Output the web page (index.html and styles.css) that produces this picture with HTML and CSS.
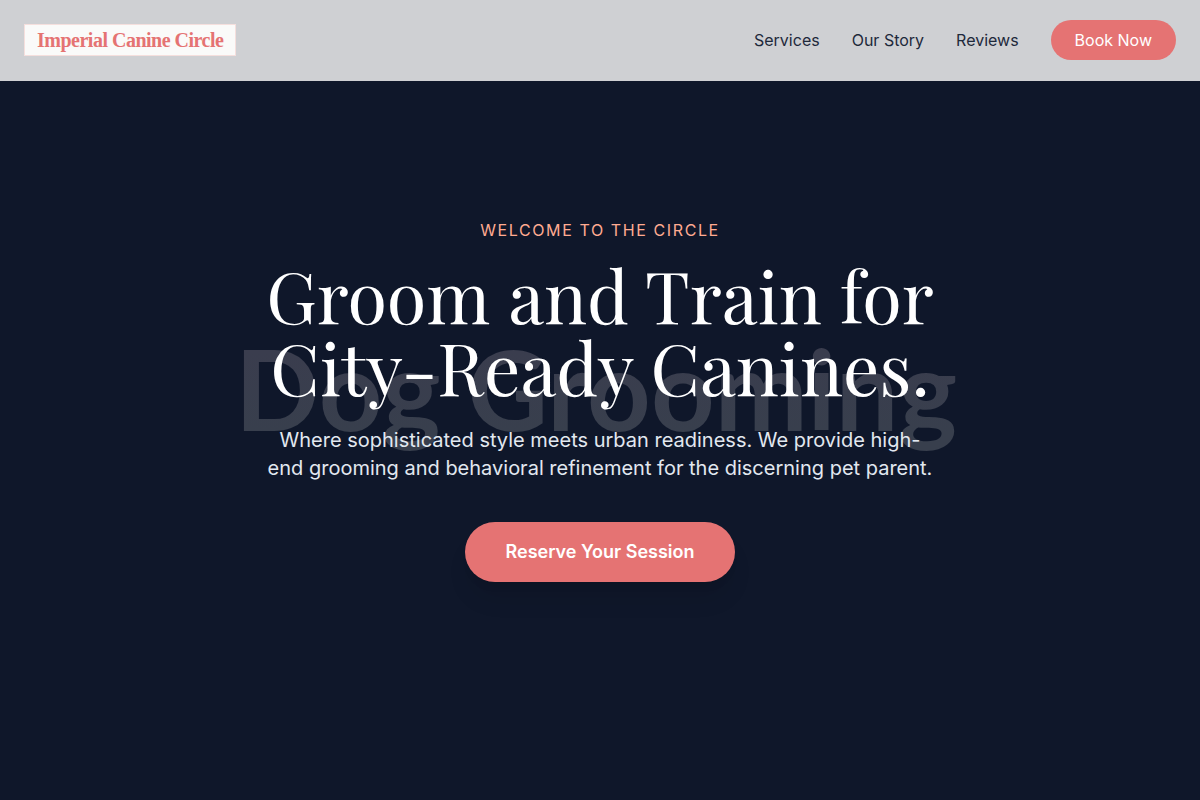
FILE: index.html
```
<!DOCTYPE html>
<html lang="en">
<head>
    <meta charset="UTF-8">
    <meta name="viewport" content="width=device-width, initial-scale=1.0">
    <title>Imperial Canine Circle</title>
    <link rel="stylesheet" href="styles.css">
</head>
<body>
    <header class="site-header">
        <a href="#" class="logo">Imperial Canine Circle</a>
        <nav class="site-nav">
            <a href="#services">Services</a>
            <a href="#story">Our Story</a>
            <a href="#reviews">Reviews</a>
            <button type="button" class="btn btn-small">Book Now</button>
        </nav>
    </header>

    <main class="hero">
        <div class="hero-backdrop" aria-hidden="true">Dog Grooming</div>
        <div class="hero-content">
            <p class="eyebrow">Welcome to the Circle</p>
            <h1>Groom and Train for City-Ready Canines.</h1>
            <p class="lead">Where sophisticated style meets urban readiness. We provide high-end grooming and behavioral refinement for the discerning pet parent.</p>
            <button type="button" class="btn btn-large">Reserve Your Session</button>
        </div>
    </main>
</body>
</html>
```
FILE: styles.css
```
* {
    box-sizing: border-box;
}

body {
    margin: 0;
    background-color: #0f172a;
    font-family: Inter, "Liberation Sans", sans-serif;
    font-size: 16px;
    line-height: 24px;
}

/* Header */
.site-header {
    position: fixed;
    top: 0;
    left: 0;
    right: 0;
    z-index: 10;
    display: flex;
    align-items: center;
    justify-content: space-between;
    padding: 20px 24px;
    background-color: #cfd0d3;
    border-bottom: 1px solid #cfd0d3;
}

.logo {
    padding: 3px 12px;
    background-color: #fafaf9;
    border: 1px solid #f5dfdd;
    color: #e57373;
    font-family: "Liberation Serif", serif;
    font-size: 20px;
    font-weight: 700;
    letter-spacing: -0.025em;
    text-decoration: none;
}

.site-nav {
    display: flex;
    align-items: center;
    gap: 32px;
}

.site-nav a {
    color: #1e293b;
    text-decoration: none;
}

.btn {
    border: none;
    border-radius: 999px;
    background-color: #e57373;
    color: #fff;
    font-family: inherit;
    cursor: pointer;
}

.btn-small {
    padding: 8px 24px;
    font-size: 16px;
    line-height: 24px;
}

.btn-large {
    padding: 16px 40px;
    font-size: 18px;
    font-weight: 600;
    line-height: 28px;
    box-shadow: 0 20px 25px -5px rgba(0, 0, 0, 0.1), 0 8px 10px -6px rgba(0, 0, 0, 0.1);
}

/* Hero */
.hero {
    position: relative;
    display: flex;
    align-items: center;
    justify-content: center;
    min-height: 100vh;
    padding: 96px 24px;
}

.hero-backdrop {
    position: absolute;
    inset: 0;
    display: flex;
    align-items: center;
    justify-content: center;
    padding: 0 8px 24px 0;
    background: linear-gradient(#3a3d4e 44%, #383f4d 54%) text;
    color: transparent;
    font-family: Lato, sans-serif;
    font-size: 111px;
    font-weight: 700;
    line-height: 1;
    white-space: nowrap;
}

.hero-content {
    position: relative;
    max-width: 768px;
    text-align: center;
}

.eyebrow {
    margin: 0 0 16px;
    color: #ffab91;
    letter-spacing: 0.1em;
    text-transform: uppercase;
}

h1 {
    margin: 0 0 24px;
    color: #fff;
    font-family: "Playfair Display", "Liberation Serif", serif;
    font-size: 72px;
    font-weight: 400;
    line-height: 72px;
}

.lead {
    max-width: 672px;
    margin: 0 auto 40px;
    color: #e2e8f0;
    font-size: 20px;
    line-height: 28px;
}
```
